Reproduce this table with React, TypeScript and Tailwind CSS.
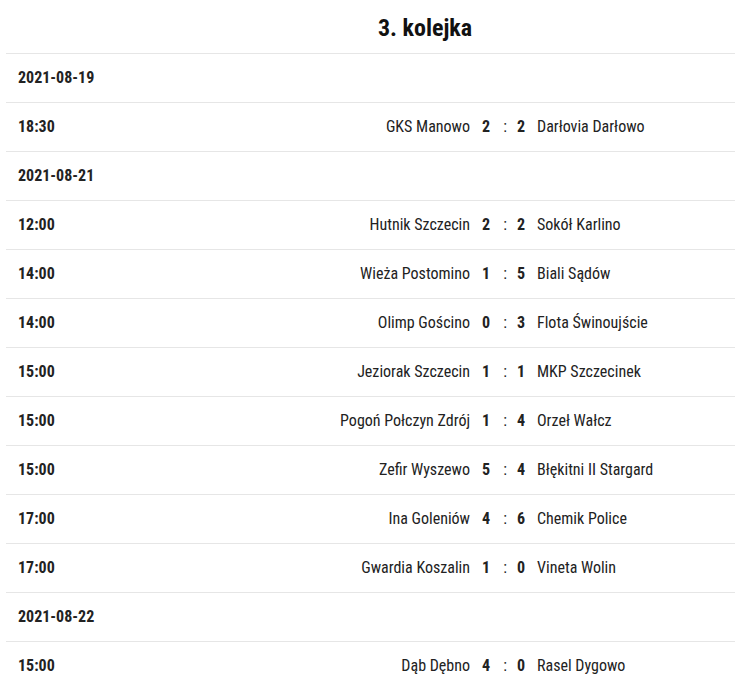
const days = [
  {
    date: "2021-08-19",
    matches: [["18:30", "GKS Manowo", "2", "2", "Darłovia Darłowo"]],
  },
  {
    date: "2021-08-21",
    matches: [
      ["12:00", "Hutnik Szczecin", "2", "2", "Sokół Karlino"],
      ["14:00", "Wieża Postomino", "1", "5", "Biali Sądów"],
      ["14:00", "Olimp Gościno", "0", "3", "Flota Świnoujście"],
      ["15:00", "Jeziorak Szczecin", "1", "1", "MKP Szczecinek"],
      ["15:00", "Pogoń Połczyn Zdrój", "1", "4", "Orzeł Wałcz"],
      ["15:00", "Zefir Wyszewo", "5", "4", "Błękitni II Stargard"],
      ["17:00", "Ina Goleniów", "4", "6", "Chemik Police"],
      ["17:00", "Gwardia Koszalin", "1", "0", "Vineta Wolin"],
    ],
  },
  {
    date: "2021-08-22",
    matches: [["15:00", "Dąb Dębno", "4", "0", "Rasel Dygowo"]],
  },
];

export default function App() {
  return (
    <div
      className="h-[698px] overflow-hidden bg-white text-[#222] [font-stretch:condensed]"
      style={{ fontFamily: "Roboto, 'Liberation Sans', sans-serif" }}
    >
      <div className="ml-[6px]">
        <h2 className="flex h-[53px] items-center justify-center pl-[109px] pt-[2px] text-[24px] font-bold text-[#111]">
          3. kolejka
        </h2>
        {days.map((day) => (
          <div key={day.date}>
            <div className="flex h-[49px] items-center border-t border-[#e6e6e6] pl-3 text-[16px] font-bold">
              {day.date}
            </div>
            {day.matches.map(([time, home, hs, as, away], i) => (
              <div
                key={day.date + i}
                className="grid h-[49px] grid-cols-[1fr_32px_6px_26px_201px] items-center border-t border-[#e6e6e6] text-[16px]"
              >
                <div className="flex items-center justify-between pl-3">
                  <span className="font-bold">{time}</span>
                  <span>{home}</span>
                </div>
                <span className="text-center font-bold">{hs}</span>
                <span className="text-center">:</span>
                <span className="text-center font-bold">{as}</span>
                <span className="pl-[3px]">{away}</span>
              </div>
            ))}
          </div>
        ))}
      </div>
    </div>
  );
}
